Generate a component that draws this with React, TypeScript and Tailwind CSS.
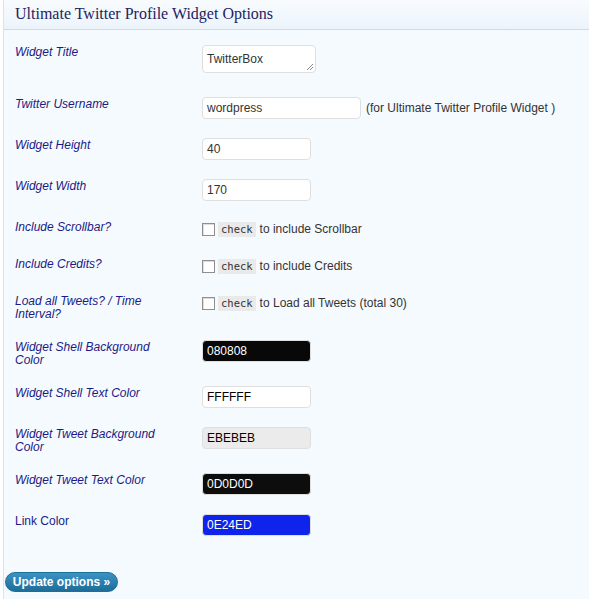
import type { ReactNode } from "react";

const labelCls =
    "w-[187px] shrink-0 pr-[27px] pt-px text-[12px] leading-[13px] text-[#1b1b85]";

function Row({
    label,
    italic = true,
    children,
}: {
    label: string;
    italic?: boolean;
    children: ReactNode;
}) {
    return (
        <div className="flex items-start">
            <div className={labelCls + (italic ? " italic" : "")}>{label}</div>
            <div className="flex items-center">{children}</div>
        </div>
    );
}

function TextInput({
    value,
    width,
    bg = "bg-white",
    color = "text-[#333]",
}: {
    value: string;
    width: string;
    bg?: string;
    color?: string;
}) {
    return (
        <div
            className={`${width} ${bg} ${color} h-[22px] rounded-[4px] border border-[#dfdfdf] px-[4px] text-[12px] leading-[20px]`}
        >
            {value}
        </div>
    );
}

function CheckRow({ text }: { text: string }) {
    return (
        <div className="flex h-[18px] items-center text-[12px] text-[#333]">
            <span className="mr-[3px] h-[13px] w-[13px] border border-[#8f8f8f] bg-white shadow-[inset_1px_1px_0_#ddd]" />
            <code className="mr-[4px] bg-[#eaeaea] px-[3px] py-[1px] font-['DejaVu_Sans_Mono',monospace] text-[10.5px] leading-[13px] text-[#333]">
                check
            </code>
            <span>{text}</span>
        </div>
    );
}

export default function App() {
    return (
        <div className="min-h-[599px] w-[589px] bg-white font-['Liberation_Sans',Arial,sans-serif]">
            <div className="ml-[3px] min-h-[599px] border-l border-[#dde3e8] bg-[#f5faff]">
                <div className="h-[30px] border-b border-[#c9dce8] bg-gradient-to-b from-[#f8fbfe] to-[#ecf4fb] pl-[11px] font-['Liberation_Serif',serif] text-[16px] leading-[28px] text-[#23235e]">
                    Ultimate Twitter Profile Widget Options
                </div>
                <div className="flex flex-col gap-[19px] pl-[11px] pt-[15px]">
                    <Row label="Widget Title">
                        <div className="relative mb-[5px] h-[28px] w-[114px] rounded-[4px] border border-[#dfdfdf] bg-white px-[4px] pt-[6px] text-[12px] leading-[14px] text-[#333]">
                            TwitterBox
                            <svg
                                className="absolute bottom-[2px] right-[2px]"
                                width="7"
                                height="7"
                                viewBox="0 0 7 7"
                            >
                                <path d="M1 7 L7 1 M4 7 L7 4" stroke="#888" strokeWidth="1" />
                            </svg>
                        </div>
                    </Row>
                    <Row label="Twitter Username">
                        <TextInput value="wordpress" width="w-[159px]" />
                        <span className="ml-[5px] text-[12px] text-[#333]">
                            (for Ultimate Twitter Profile Widget )
                        </span>
                    </Row>
                    <Row label="Widget Height">
                        <TextInput value="40" width="w-[109px]" />
                    </Row>
                    <Row label="Widget Width">
                        <TextInput value="170" width="w-[109px]" />
                    </Row>
                    <Row label="Include Scrollbar?">
                        <CheckRow text="to include Scrollbar" />
                    </Row>
                    <Row label="Include Credits?">
                        <CheckRow text="to include Credits" />
                    </Row>
                    <Row label="Load all Tweets? / Time Interval?">
                        <CheckRow text="to Load all Tweets (total 30)" />
                    </Row>
                    <Row label="Widget Shell Background Color">
                        <TextInput
                            value="080808"
                            width="w-[109px]"
                            bg="bg-[#080808]"
                            color="text-white"
                        />
                    </Row>
                    <Row label="Widget Shell Text Color">
                        <TextInput value="FFFFFF" width="w-[109px]" color="text-black" />
                    </Row>
                    <Row label="Widget Tweet Background Color">
                        <TextInput
                            value="EBEBEB"
                            width="w-[109px]"
                            bg="bg-[#ebebeb]"
                            color="text-black"
                        />
                    </Row>
                    <Row label="Widget Tweet Text Color">
                        <TextInput
                            value="0D0D0D"
                            width="w-[109px]"
                            bg="bg-[#0d0d0d]"
                            color="text-white"
                        />
                    </Row>
                    <Row label="Link Color" italic={false}>
                        <TextInput
                            value="0E24ED"
                            width="w-[109px]"
                            bg="bg-[#0e24ed]"
                            color="text-white"
                        />
                    </Row>
                </div>
                <div className="pl-[1px] pt-[33px]">
                    <button className="h-[20px] w-[113px] rounded-full border border-[#1f6e98] bg-gradient-to-b from-[#3a93c4] to-[#1e6d99] text-[12px] font-bold leading-[18px] text-white">
                        Update options »
                    </button>
                </div>
            </div>
        </div>
    );
}
